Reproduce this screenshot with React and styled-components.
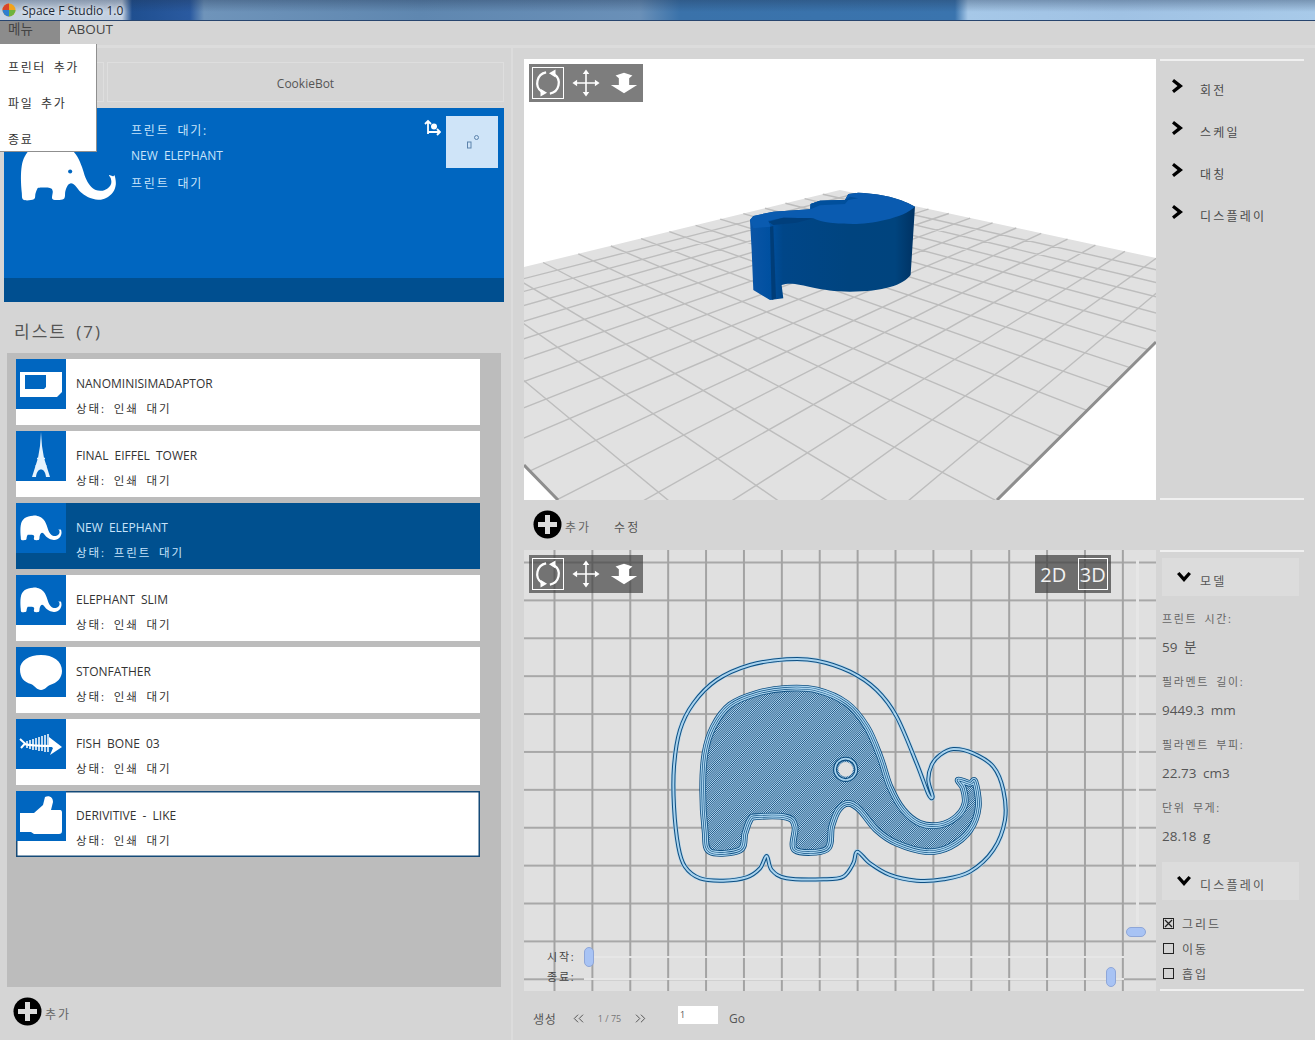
import styled, { createGlobalStyle } from "styled-components";
import { ChevronsLeft, ChevronsRight } from "lucide-react";

// closed catmull-rom curve through traced points
const smooth = (pts) => {
  const n = pts.length;
  let d = `M${pts[0][0]} ${pts[0][1]}`;
  for (let i = 0; i < n; i++) {
    const p0 = pts[(i - 1 + n) % n];
    const p1 = pts[i];
    const p2 = pts[(i + 1) % n];
    const p3 = pts[(i + 2) % n];
    const c1x = p1[0] + (p2[0] - p0[0]) / 6;
    const c1y = p1[1] + (p2[1] - p0[1]) / 6;
    const c2x = p2[0] - (p3[0] - p1[0]) / 6;
    const c2y = p2[1] - (p3[1] - p1[1]) / 6;
    d += `C${c1x.toFixed(1)} ${c1y.toFixed(1)} ${c2x.toFixed(1)} ${c2y.toFixed(1)} ${p2[0]} ${p2[1]}`;
  }
  return d + "Z";
};

const OUTER = smooth([
  [350, 648], [365, 690], [410, 715], [520, 718], [580, 710], [610, 670], [622, 635], [660, 670],
  [720, 705], [800, 722], [880, 718], [960, 695], [1030, 630], [1065, 540], [1060, 450], [1030, 380],
  [970, 340], [910, 327], [870, 345], [845, 375], [835, 420], [848, 470], [835, 462], [800, 370],
  [740, 230], [680, 150], [600, 95], [500, 62], [410, 58], [300, 75], [200, 120], [130, 190],
  [90, 270], [72, 380], [72, 500], [85, 620], [105, 680], [150, 715], [220, 722], [290, 712], [330, 685],
]);

const BODY = smooth([
  [180, 635], [270, 630], [285, 580], [300, 540], [320, 530], [410, 532], [435, 560], [435, 630],
  [530, 628], [545, 560], [565, 510], [595, 490], [630, 510], [680, 570], [740, 610], [830, 635],
  [900, 620], [960, 570], [985, 500], [975, 425], [960, 430], [925, 420], [940, 445], [945, 490],
  [920, 530], [870, 555], [810, 550], [760, 510], [720, 440], [690, 350], [650, 260], [590, 190],
  [500, 150], [410, 145], [320, 160], [240, 195], [190, 260], [165, 340], [158, 450], [165, 570],
]);

// perspective grid of the build plate
const quad = (p0, p1, p2, p3) => {
  const dx1 = p1[0] - p2[0];
  const dx2 = p3[0] - p2[0];
  const sx = p0[0] - p1[0] + p2[0] - p3[0];
  const dy1 = p1[1] - p2[1];
  const dy2 = p3[1] - p2[1];
  const sy = p0[1] - p1[1] + p2[1] - p3[1];
  const den = dx1 * dy2 - dx2 * dy1;
  const g = (sx * dy2 - dx2 * sy) / den;
  const h = (dx1 * sy - sx * dy1) / den;
  const a = p1[0] - p0[0] + g * p1[0];
  const b = p3[0] - p0[0] + h * p3[0];
  const d = p1[1] - p0[1] + g * p1[1];
  const e = p3[1] - p0[1] + h * p3[1];
  return (u, v) => {
    const w = g * u + h * v + 1;
    return [(a * u + b * v + p0[0]) / w, (d * u + e * v + p0[1]) / w];
  };
};

const plate = quad([840, 190], [369, 305], [774, 722], [1225, 273]);
const CELLS = 16;
const plateLines = () => {
  let d = "";
  for (let i = 1; i < CELLS; i++) {
    const t = i / CELLS;
    const [ax, ay] = plate(t, 0);
    const [bx, by] = plate(t, 1);
    const [cx, cy] = plate(0, t);
    const [ex, ey] = plate(1, t);
    d += `M${ax.toFixed(1)} ${ay.toFixed(1)}L${bx.toFixed(1)} ${by.toFixed(1)}`;
    d += `M${cx.toFixed(1)} ${cy.toFixed(1)}L${ex.toFixed(1)} ${ey.toFixed(1)}`;
  }
  return d;
};

const GlobalStyle = createGlobalStyle`
  html, body {
    margin: 0;
    padding: 0;
    background: #d5d5d5;
  }
  * {
    box-sizing: border-box;
  }
`;

const Page = styled.div`
  position: relative;
  width: 1315px;
  height: 1040px;
  overflow: hidden;
  display: flex;
  flex-direction: column;
  background: #d5d5d5;
  color: #444;
  font-family: "Open Sans", "Noto Sans CJK KR", sans-serif;
  font-size: 12px;
  word-spacing: 3px;
`;

const TitleBar = styled.div`
  height: 21px;
  flex: none;
  display: flex;
  align-items: center;
  gap: 6px;
  padding-left: 2px;
  border-bottom: 1px solid #27456f;
  background:
    linear-gradient(to bottom, rgba(30, 50, 80, 0.35), rgba(30, 50, 80, 0) 60%),
    linear-gradient(
      to right,
      #c6d3e2 0,
      #c2cfe0 122px,
      #1f4f90 132px,
      #2a5aa0 190px,
      #6f94ba 204px,
      #5f87b0 420px,
      #6a90b8 640px,
      #3a72aa 680px,
      #3a74ae 955px,
      #a6c8e8 968px,
      #a0c2e4 1120px,
      #a8cae9 1315px
    );
`;

const AppTitle = styled.span`
  font-size: 12px;
  word-spacing: 0;
  color: #1e2a36;
  text-shadow: 0 0 4px #fff;
`;

const MenuBar = styled.div`
  height: 27px;
  flex: none;
  display: flex;
  align-items: flex-start;
  border-bottom: 3px solid #dcdcdc;
`;

const MenuTab = styled.div`
  width: 60px;
  height: 23px;
  padding-left: 8px;
  font-size: 13.5px;
  line-height: 17px;
  color: #444;
  background: ${(p) => (p.$open ? "#8c8c8c" : "transparent")};
`;

const Dropdown = styled.div`
  position: absolute;
  top: 44px;
  left: 0;
  z-index: 5;
  width: 97px;
  height: 108px;
  padding-top: 6px;
  background: #fff;
  border-right: 1px solid #8f8f8f;
  border-bottom: 1px solid #8f8f8f;
`;

const DropdownItem = styled.div`
  height: 36px;
  padding-left: 8px;
  font-size: 12px;
  line-height: 36px;
  letter-spacing: 1.6px;
  color: #333;
`;

const Main = styled.div`
  flex: 1;
  min-height: 0;
  display: flex;
`;

const LeftColumn = styled.div`
  width: 513px;
  flex: none;
  padding: 14px 7px 0 4px;
  border-right: 2px solid #dcdcdc;
  display: flex;
  flex-direction: column;
`;

const TabRow = styled.div`
  height: 40px;
  flex: none;
  display: flex;
  gap: 3px;
`;

const PrinterTab = styled.div`
  flex: ${(p) => (p.$small ? "0 0 100px" : "1")};
  display: flex;
  align-items: center;
  justify-content: center;
  padding-top: 2px;
  border: 1px solid #dedede;
  font-size: 12px;
  color: #555;
`;

const PrinterCard = styled.div`
  height: 194px;
  flex: none;
  margin-top: 6px;
  display: flex;
  flex-direction: column;
  background: #0066c0;
`;

const CardBody = styled.div`
  flex: 1;
  display: flex;
  padding: 8px 6px 0 16px;
`;

const CardArt = styled.div`
  width: 111px;
  flex: none;
  padding-top: 27px;
`;

const CardText = styled.div`
  flex: 1;
  color: #c8e4fb;
  font-size: 12px;
`;

const CardLine = styled.div`
  height: 26.5px;
  line-height: ${(p) => (p.$hangul ? "30px" : "26.5px")};
  letter-spacing: ${(p) => (p.$hangul ? "1.8px" : "0")};
`;

const CardTool = styled.div`
  width: 22px;
  flex: none;
  padding-top: 3px;
`;

const CardThumb = styled.div`
  width: 52px;
  height: 52px;
  flex: none;
  background: #cfe4f8;
`;

const CardFooter = styled.div`
  height: 24px;
  flex: none;
  background: #004f90;
`;

const ListTitle = styled.div`
  height: 51px;
  flex: none;
  padding: 18px 0 0 10px;
  font-size: 17px;
  line-height: 24px;
  letter-spacing: 2px;
  color: #555;
`;

const ListPanel = styled.div`
  height: 634px;
  flex: none;
  margin: 0 3px;
  padding: 6px 21px 0 9px;
  background: #bcbcbc;
  display: flex;
  flex-direction: column;
  gap: 6px;
`;

const Row = styled.div`
  height: 66px;
  flex: none;
  display: flex;
  align-items: flex-start;
  background: ${(p) => (p.$selected ? "#00508f" : "#fff")};
  box-shadow: ${(p) => (p.$focused ? "inset 0 0 0 1.5px #154a78" : "none")};
`;

const RowThumb = styled.div`
  width: 50px;
  height: 50px;
  flex: none;
  background: #0066c0;
`;

const RowText = styled.div`
  padding: 13px 0 0 10px;
  color: ${(p) => (p.$selected ? "#c8e4fb" : "#333")};
`;

const RowName = styled.div`
  height: 25px;
  line-height: 24px;
  font-size: 12px;
  white-space: nowrap;
`;

const RowStatus = styled.div`
  line-height: 24px;
  font-size: 11.5px;
  letter-spacing: 1.9px;
  white-space: nowrap;
`;

const AddRow = styled.div`
  display: flex;
  align-items: flex-start;
  gap: 3px;
  font-size: 12px;
  color: #666;
`;

const ActionLabel = styled.span`
  line-height: 36px;
  letter-spacing: 2px;
`;

const LeftFooter = styled.div`
  padding: 10px 0 0 9px;
`;

const RightColumn = styled.div`
  flex: 1;
  padding: 11px 9px 0 11px;
  display: flex;
  flex-direction: column;
`;

const ViewRow = styled.div`
  height: 441px;
  flex: none;
  display: flex;
`;

const Canvas = styled.div`
  position: relative;
  width: 632px;
  flex: none;
  overflow: hidden;
  background: ${(p) => (p.$white ? "#fff" : "#e0e0e0")};
`;

const GridCanvas = styled(Canvas)`
  background-image:
    linear-gradient(to right, #a3a3a3 2px, transparent 2px),
    linear-gradient(to bottom, #a8a8a8 2px, transparent 2px);
  background-size: 37.9px 37.9px;
  background-position: 29.5px 11.5px;
`;

const SceneSvg = styled.svg`
  position: absolute;
  inset: 0;
  width: 632px;
  height: 441px;
`;

const ToolBox = styled.div`
  position: absolute;
  top: 5px;
  left: 5px;
  width: 114px;
  height: 38px;
  padding: 3px;
  display: flex;
  background: rgba(64, 64, 64, 0.68);
`;

const ToolCell = styled.div`
  width: 32px;
  height: 32px;
  margin-right: 6px;
  border: ${(p) => (p.$active ? "1px solid #fff" : "1px solid transparent")};
  display: flex;
  align-items: center;
  justify-content: center;
  color: #fff;
`;

const ModeBox = styled.div`
  position: absolute;
  top: 5px;
  left: 511px;
  width: 76px;
  height: 38px;
  padding: 3px;
  display: flex;
  gap: 9px;
  background: rgba(64, 64, 64, 0.72);
`;

const ModeCell = styled.div`
  width: 32px;
  height: 32px;
  display: flex;
  align-items: center;
  justify-content: center;
  font-size: 20px;
  word-spacing: 0;
  color: #f2f2f2;
  border: ${(p) => (p.$active ? "1px solid #fff" : "1px solid transparent")};
`;

const SideMenu = styled.div`
  flex: 1;
  margin: 0 2px 0 4px;
  padding: 8px 0 0 12px;
  border-top: 2px solid #f0f0f0;
  border-bottom: 2px solid #f0f0f0;
`;

const SideItem = styled.div`
  height: 42px;
  display: flex;
  align-items: center;
  gap: 17px;
  font-size: 12px;
  letter-spacing: 2.2px;
  color: #4a4a4a;
  svg {
    margin-top: -8px;
  }
`;

const ActionBar = styled.div`
  height: 50px;
  flex: none;
  padding: 10px 0 0 9px;
  display: flex;
  align-items: flex-start;
  gap: 23px;
  font-size: 12px;
  color: #555;
`;

const SidePanel = styled.div`
  flex: 1;
  margin: 0 2px 0 4px;
  padding: 6px 5px 0 2px;
  border-top: 2px solid #f0f0f0;
  border-bottom: 2px solid #f0f0f0;
  display: flex;
  flex-direction: column;
`;

const Accordion = styled.div`
  height: 38px;
  flex: none;
  padding-left: 15px;
  display: flex;
  align-items: center;
  gap: 9px;
  background: #dcdcdc;
  font-size: 12px;
  letter-spacing: 2.2px;
  color: #555;
  span {
    margin-top: 8px;
  }
`;

const Stats = styled.div`
  flex: none;
  height: 266px;
  padding-top: 8px;
`;

const StatLabel = styled.div`
  height: 30px;
  line-height: 30px;
  font-size: 11px;
  letter-spacing: 1.6px;
  color: #666;
`;

const StatValue = styled.div`
  height: 33px;
  line-height: 26px;
  font-size: 13.5px;
  color: #555;
`;

const Checks = styled.div`
  padding: 11px 0 0 1px;
`;

const CheckRow = styled.div`
  height: 25px;
  display: flex;
  align-items: center;
  gap: 8px;
  font-size: 12px;
  letter-spacing: 1.9px;
  color: #555;
`;

const CheckBox = styled.svg`
  width: 11px;
  height: 11px;
  flex: none;
`;

const Track = styled.div`
  position: absolute;
  background: #e6e6e6;
  left: ${(p) => p.$left}px;
  top: ${(p) => p.$top}px;
  width: ${(p) => p.$width}px;
  height: ${(p) => p.$height}px;
`;

const Thumb = styled.div`
  position: absolute;
  left: ${(p) => p.$left}px;
  top: ${(p) => p.$top}px;
  width: ${(p) => p.$width}px;
  height: ${(p) => p.$height}px;
  border-radius: 5px;
  background: #a8c3f4;
  border: 1px solid #8ea6d8;
`;

const SliderLabel = styled.div`
  position: absolute;
  left: 23px;
  top: ${(p) => p.$top}px;
  font-size: 11px;
  letter-spacing: 1.8px;
  color: #444;
`;

const LayerBar = styled.div`
  padding: 6px 0 0 9px;
  display: flex;
  align-items: center;
  height: 49px;
  color: #555;
`;

const LayerLabel = styled.span`
  width: 37px;
  font-size: 12px;
  letter-spacing: 0.6px;
`;

const LayerCount = styled.span`
  width: 45px;
  text-align: center;
  font-size: 9px;
  word-spacing: 0;
  color: #777;
`;

const LayerInput = styled.div`
  width: 40px;
  height: 18px;
  margin: 0 0 8px 29px;
  padding-left: 2px;
  background: #fff;
  font-size: 9px;
  line-height: 18px;
  color: #555;
`;

const GoLabel = styled.span`
  margin-left: 11px;
  font-size: 12px;
`;

const AddIcon = () => (
  <svg width="29" height="29" viewBox="0 0 29 29">
    <circle cx="14.5" cy="14.5" r="14" fill="#000" />
    <path d="M12 5h5v7h7v5h-7v7h-5v-7H5v-5h7z" fill="#dcdcdc" />
  </svg>
);

const ChevronRight = () => (
  <svg width="11" height="14" viewBox="0 0 11 14">
    <path d="M2 0L11 7L2 14L0 11.500L5.500 7L0 2.500z" fill="#000" />
  </svg>
);

const ChevronDown = () => (
  <svg width="14" height="10" viewBox="0 0 14 10">
    <path d="M0 2L2.500 0L7 5L11.500 0L14 2L7 10z" fill="#000" />
  </svg>
);

const ElephantShape = ({ width }) => (
  <svg width={width} height={width * 0.6} viewBox="150 140 845 507">
    <path d={BODY} fill="#fff" />
    <circle cx="587" cy="388" r="18" fill="#0066c0" />
  </svg>
);

const RotateIcon = () => (
  <svg width="30" height="30" viewBox="0 0 32 32" fill="none">
    <path d="M14 4.700A11.500 11.500 0 0 0 9.500 25.500" stroke="#fff" strokeWidth="2.400" />
    <path d="M18 27.300A11.500 11.500 0 0 0 22.500 6.500" stroke="#fff" strokeWidth="2.400" />
    <path d="M24 1.500V10L17 5.500zM8 30.500V22L15 26.500z" fill="#fff" />
  </svg>
);

const MoveIcon = () => (
  <svg width="30" height="30" viewBox="0 0 32 32" fill="none">
    <path d="M16 4V28M4 16H28" stroke="#fff" strokeWidth="1.700" />
    <path d="M16 1.500l3.500 5h-7zM16 30.500l3.500-5h-7zM1.500 16l5-3.500v7zM30.500 16l-5-3.500v7z" fill="#fff" />
  </svg>
);

const DropIcon = () => (
  <svg width="30" height="30" viewBox="0 0 32 32">
    <path d="M7 8L16 5L25 8L21.500 11V18H30L16 27L2 18H10.500V11z" fill="#fff" />
  </svg>
);

const ViewTools = () => (
  <ToolBox>
    <ToolCell $active>
      <RotateIcon />
    </ToolCell>
    <ToolCell>
      <MoveIcon />
    </ToolCell>
    <ToolCell>
      <DropIcon />
    </ToolCell>
  </ToolBox>
);

const SimArt = () => (
  <svg width="50" height="50" viewBox="0 0 50 50">
    <path d="M4 13H46V33L41 38H4z" fill="#fff" />
    <path d="M9 16H30V28L28 30H9z" fill="#0066c0" />
  </svg>
);

const TowerArt = () => (
  <svg width="50" height="50" viewBox="0 0 50 50">
    <path
      d="M25 1L26 15L28 27L34 46H30C29.500 41 27.500 38.500 25 38.500C22.500 38.500 20.500 41 20 46H16L22 27L24 15z"
      fill="#e6f3fd"
    />
    <path d="M21 27.500H29M19.500 35H30.500" stroke="#e6f3fd" strokeWidth="1.500" />
  </svg>
);

const BlobArt = () => (
  <svg width="50" height="50" viewBox="0 0 50 50">
    <path
      d="M25 8C37 8 46 14 46 24C46 31 41 36 34 38C31 39 29 43 25 43C21 43 19 39 15 37C8 35 4 31 4 22C4 14 13 8 25 8z"
      fill="#fff"
    />
  </svg>
);

const FishArt = () => (
  <svg width="50" height="50" viewBox="0 0 50 50">
    <path d="M4 20L9 24.500L5 29M8 25C16 27 26 27 36 27" stroke="#fff" strokeWidth="2" fill="none" />
    <path
      d="M11 22V29M14 21V30M17 20V31M20 19V31M23 18V32M26 17V32M29 16V33M32 15V33"
      stroke="#fff"
      strokeWidth="1.500"
    />
    <path d="M33 18L46 28L34 36L37 29L33 26z" fill="#fff" />
  </svg>
);

const LikeArt = () => (
  <svg width="50" height="50" viewBox="0 0 50 50">
    <path
      d="M4 22H18L27 14L29 6C33 4 37 6 37 11L35 19H44C46 19 46 21 46 22V40C46 42 45 43 43 43H18L15 41H4z"
      fill="#fff"
    />
  </svg>
);

const ITEMS = [
  { name: "NANOMINISIMADAPTOR", status: "상태: 인쇄 대기", Art: SimArt },
  { name: "FINAL EIFFEL TOWER", status: "상태: 인쇄 대기", Art: TowerArt },
  { name: "NEW ELEPHANT", status: "상태: 프린트 대기", elephant: true, selected: true },
  { name: "ELEPHANT SLIM", status: "상태: 인쇄 대기", elephant: true },
  { name: "STONFATHER", status: "상태: 인쇄 대기", Art: BlobArt },
  { name: "FISH BONE 03", status: "상태: 인쇄 대기", Art: FishArt },
  { name: "DERIVITIVE - LIKE", status: "상태: 인쇄 대기", Art: LikeArt, focused: true },
];

const STATS = [
  ["프린트 시간:", "59 분"],
  ["필라멘트 길이:", "9449.3 mm"],
  ["필라멘트 부피:", "22.73 cm3"],
  ["단위 무게:", "28.18 g"],
];

const ElephantThumb = () => (
  <svg width="50" height="50" viewBox="0 0 50 50">
    <svg x="4" y="12" width="42" height="26" viewBox="150 140 845 507">
      <path d={BODY} fill="#fff" />
    </svg>
  </svg>
);

const ModelScene = () => (
  <SceneSvg viewBox="524 59 632 441">
    <path d="M524 267L840 190L1156 258V342L997 500H558L524 465z" fill="#e1e1e1" />
    <path d={plateLines()} stroke="#bdbdbd" strokeWidth="1.400" fill="none" />
    <path d="M524 465L558 500M1156 342L997 500" stroke="#8e8e8e" strokeWidth="3" fill="none" />
    <defs>
      <linearGradient id="wall" x1="0" x2="1" y1="0" y2="0">
        <stop offset="0" stopColor="#0b55a6" />
        <stop offset="0.12" stopColor="#0050a0" />
        <stop offset="0.2" stopColor="#004688" />
        <stop offset="0.6" stopColor="#00447f" />
        <stop offset="0.88" stopColor="#00447e" />
        <stop offset="1" stopColor="#003262" />
      </linearGradient>
    </defs>
    <g transform="translate(520 50) scale(0.3333)">
      <path
        d="M690 510L695 600L700 720L750 750L790 745L785 705C830 690 880 725 990 725C1090 725 1150 705 1172 675L1185 470C1150 450 1100 432 1015 428L985 432L975 450L900 452L872 462L870 478L760 485L700 498z"
        fill="url(#wall)"
      />
      <path
        d="M690 510L700 498L760 485L870 478L872 462L900 452L975 450L985 432L1015 428C1100 432 1150 450 1185 470C1150 505 1050 522 1000 522C950 522 905 518 880 505L790 503L745 512L752 530L700 535z"
        fill="#0a5bb0"
      />
      <path d="M872 478L900 466L975 462L985 450L1015 445L990 440L975 450L900 452L872 462z" fill="#004f9c" />
      <path d="M745 515L790 503L880 505L830 518L760 525z" fill="#003f7c" />
      <path d="M750 530L760 528L768 745L755 750z" fill="#003d78" />
    </g>
  </SceneSvg>
);

const SliceScene = () => (
  <SceneSvg viewBox="524 550 632 441">
    <defs>
      <pattern id="hatch" width="4" height="4" patternUnits="userSpaceOnUse" patternTransform="rotate(45)">
        <rect width="4" height="4" fill="#b4d6ee" />
        <rect width="1.800" height="4" fill="#0f4c7e" />
      </pattern>
    </defs>
    <g transform="translate(650 640) scale(0.3333)" fill="none">
      <path d={BODY} fill="url(#hatch)" />
      <path d={OUTER} stroke="#a6d2ee" strokeWidth="16" opacity="0.7" />
      <path d={OUTER} stroke="#0e4f82" strokeWidth="12" />
      <path d={OUTER} stroke="#a9d3ee" strokeWidth="6" />
      <path d={BODY} stroke="#0e4f82" strokeWidth="20" />
      <path d={BODY} stroke="#a9d3ee" strokeWidth="15" />
      <path d={BODY} stroke="#0e4f82" strokeWidth="8" />
      <path d={BODY} stroke="#a9d3ee" strokeWidth="4" />
      <circle cx="587" cy="388" r="32" stroke="#0e4f82" strokeWidth="12" />
      <circle cx="587" cy="388" r="32" stroke="#a9d3ee" strokeWidth="5" />
      <circle cx="587" cy="388" r="22" fill="#e0e0e0" />
    </g>
  </SceneSvg>
);

const App = () => (
  <Page>
    <GlobalStyle />
    <TitleBar>
      <svg width="14" height="14" viewBox="0 0 14 14">
        <circle cx="7" cy="7" r="6.500" fill="#f2a31c" />
        <path d="M7 .5A6.500 6.500 0 0 0 .5 7H7z" fill="#d8452c" />
        <path d="M.5 7A6.500 6.500 0 0 0 7 13.500V7z" fill="#2c7fd0" />
        <path d="M7 13.500A6.500 6.500 0 0 0 13.500 7H7z" fill="#6db33f" />
      </svg>
      <AppTitle>Space F Studio 1.0</AppTitle>
    </TitleBar>
    <MenuBar>
      <MenuTab $open>메뉴</MenuTab>
      <MenuTab>ABOUT</MenuTab>
    </MenuBar>
    <Dropdown>
      <DropdownItem>프린터 추가</DropdownItem>
      <DropdownItem>파일 추가</DropdownItem>
      <DropdownItem>종료</DropdownItem>
    </Dropdown>
    <Main>
      <LeftColumn>
        <TabRow>
          <PrinterTab $small />
          <PrinterTab>CookieBot</PrinterTab>
        </TabRow>
        <PrinterCard>
          <CardBody>
            <CardArt>
              <ElephantShape width={97} />
            </CardArt>
            <CardText>
              <CardLine $hangul>프린트 대기:</CardLine>
              <CardLine>NEW ELEPHANT</CardLine>
              <CardLine $hangul>프린트 대기</CardLine>
            </CardText>
            <CardTool>
              <svg width="17" height="17" viewBox="0 0 17 17" fill="none">
                <path d="M4 15V2M1 5l3-3 3 3M4 13H16M13 10l3 3-3 3" stroke="#fff" strokeWidth="1.800" />
                <circle cx="10" cy="7.500" r="3" fill="#fff" />
              </svg>
            </CardTool>
            <CardThumb>
              <svg width="52" height="52" viewBox="0 0 52 52" fill="none">
                <rect x="21.500" y="26" width="3.500" height="6" stroke="#5d83ac" />
                <circle cx="30.500" cy="21.500" r="2" stroke="#5d83ac" />
              </svg>
            </CardThumb>
          </CardBody>
          <CardFooter />
        </PrinterCard>
        <ListTitle>리스트 (7)</ListTitle>
        <ListPanel>
          {ITEMS.map(({ name, status, Art, elephant, selected, focused }) => (
            <Row key={name} $selected={selected} $focused={focused}>
              <RowThumb>{elephant ? <ElephantThumb /> : <Art />}</RowThumb>
              <RowText $selected={selected}>
                <RowName>{name}</RowName>
                <RowStatus>{status}</RowStatus>
              </RowText>
            </Row>
          ))}
        </ListPanel>
        <LeftFooter>
          <AddRow>
            <AddIcon />
            <ActionLabel>추가</ActionLabel>
          </AddRow>
        </LeftFooter>
      </LeftColumn>
      <RightColumn>
        <ViewRow>
          <Canvas $white>
            <ModelScene />
            <ViewTools />
          </Canvas>
          <SideMenu>
            {["회전", "스케일", "대칭", "디스플레이"].map((label) => (
              <SideItem key={label}>
                <ChevronRight />
                {label}
              </SideItem>
            ))}
          </SideMenu>
        </ViewRow>
        <ActionBar>
          <AddRow>
            <AddIcon />
            <ActionLabel>추가</ActionLabel>
          </AddRow>
          <ActionLabel>수정</ActionLabel>
        </ActionBar>
        <ViewRow>
          <GridCanvas>
            <SliceScene />
            <ViewTools />
            <ModeBox>
              <ModeCell>2D</ModeCell>
              <ModeCell $active>3D</ModeCell>
            </ModeBox>
            <Track $left={612} $top={10} $width={3} $height={365} />
            <Track $left={60} $top={406} $width={540} $height={2} />
            <Track $left={60} $top={428} $width={540} $height={2} />
            <Thumb $left={602} $top={377} $width={20} $height={10} />
            <Thumb $left={60} $top={397} $width={10} $height={20} />
            <Thumb $left={582} $top={417} $width={10} $height={20} />
            <SliderLabel $top={398}>시작:</SliderLabel>
            <SliderLabel $top={418}>종료:</SliderLabel>
          </GridCanvas>
          <SidePanel>
            <Accordion>
              <ChevronDown />
              <span>모델</span>
            </Accordion>
            <Stats>
              {STATS.map(([label, value]) => (
                <div key={label}>
                  <StatLabel>{label}</StatLabel>
                  <StatValue>{value}</StatValue>
                </div>
              ))}
            </Stats>
            <Accordion>
              <ChevronDown />
              <span>디스플레이</span>
            </Accordion>
            <Checks>
              {["그리드", "이동", "흡입"].map((label, i) => (
                <CheckRow key={label}>
                  <CheckBox viewBox="0 0 11 11" fill="none">
                    <rect x="0.500" y="0.500" width="10" height="10" stroke="#222" />
                    {i === 0 && <path d="M2 2L9 9M9 2L2 9" stroke="#222" strokeWidth="1.300" />}
                  </CheckBox>
                  {label}
                </CheckRow>
              ))}
            </Checks>
          </SidePanel>
        </ViewRow>
        <LayerBar>
          <LayerLabel>생성</LayerLabel>
          <ChevronsLeft size={17} strokeWidth={1.4} />
          <LayerCount>1 / 75</LayerCount>
          <ChevronsRight size={17} strokeWidth={1.4} />
          <LayerInput>1</LayerInput>
          <GoLabel>Go</GoLabel>
        </LayerBar>
      </RightColumn>
    </Main>
  </Page>
);

export default App;
